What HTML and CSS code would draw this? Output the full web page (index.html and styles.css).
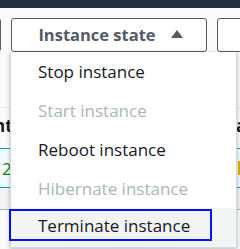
FILE: index.html
```html
<!DOCTYPE html>
<html>
	<head>
		<title>Instance state</title>
		<link rel="stylesheet" href="styles.css">
	</head>
	<body>
		<div class="page">
			<div class="topbar"></div>

			<div class="toolbar">
				<button class="btn btn-edge btn-left"></button>
				<div class="dropdown">
					<button class="btn btn-main">
						<span>Instance state</span>
						<svg class="caret" width="12" height="8" viewBox="0 0 12 8"><polygon points="6,0 12,8 0,8" fill="#545b64"/></svg>
					</button>
					<ul class="menu">
						<li class="item">Stop instance</li>
						<li class="item disabled">Start instance</li>
						<li class="item">Reboot instance</li>
						<li class="item disabled">Hibernate instance</li>
						<li class="item active"><span class="ring">Terminate instance</span></li>
					</ul>
				</div>
				<button class="btn btn-edge"></button>
			</div>

			<div class="table">
				<div class="row row-gap"></div>
				<div class="row row-head">
					<span class="cell-left">nt</span>
					<span class="cell-right">a</span>
				</div>
				<div class="row row-selected">
					<span class="cell-left num">2</span>
					<span class="cell-right"><span class="dot"></span><span class="warn">l</span></span>
				</div>
				<div class="row row-next"></div>
			</div>
		</div>
	</body>
</html>
```

FILE: styles.css
```css
body {
	margin: 0;
	background-color: #fafafa;
	font-family: "Open Sans", sans-serif;
	color: #16191f;
}
.page {
	height: 249px;
	overflow: hidden;
}
.topbar {
	height: 8px;
	background-color: #232f3e;
}

.toolbar {
	display: flex;
	gap: 10px;
	padding-top: 10px;
	height: 34px;
}
.btn {
	box-sizing: border-box;
	height: 34px;
	background-color: #fff;
	border: 1px solid #545b64;
	border-radius: 3px;
	font-family: inherit;
}
.btn-edge {
	width: 40px;
	flex-shrink: 0;
}
.btn-left {
	margin-left: -39px;
}
.dropdown {
	position: relative;
	z-index: 2;
}
.btn-main {
	width: 196px;
	display: flex;
	align-items: center;
	justify-content: center;
	gap: 15px;
	padding: 0 0 1px 3px;
	color: #545b64;
	font-size: 16.5px;
	font-weight: 700;
}
.caret {
	margin-top: -1px;
}

.menu {
	position: absolute;
	left: -1px;
	top: 34px;
	width: 225px;
	margin: 0;
	padding: 0;
	list-style: none;
	background-color: #fff;
	border: 1px solid #d5dbdb;
	border-top: 0;
	box-shadow: 0 1px 4px rgba(0, 28, 36, 0.3);
}
.item {
	box-sizing: border-box;
	height: 39px;
	padding-left: 27px;
	display: flex;
	align-items: center;
	font-size: 17px;
}
.disabled {
	color: #aab7b8;
}
.active {
	background-color: #f2f3f3;
	padding: 0;
	align-items: flex-start;
}
.ring {
	box-sizing: border-box;
	width: 203px;
	height: 32px;
	margin: 1px 0 0 -2px;
	padding-left: 27px;
	border: 2px solid #0011ff;
	display: flex;
	align-items: center;
}

.table {
	position: relative;
	z-index: 1;
}
.row {
	display: flex;
	justify-content: space-between;
	align-items: center;
	font-size: 17px;
}
.row-gap {
	height: 55px;
	border-bottom: 1px solid #eaeded;
}
.row-head {
	box-sizing: border-box;
	height: 41px;
	padding-bottom: 6px;
	font-weight: 700;
	border-bottom: 1px solid #00a1c9;
}
.row-selected {
	height: 38px;
	background-color: #f1faff;
	border-bottom: 1px solid #00a1c9;
}
.row-next {
	height: 21px;
	background-color: #f2f3f3;
	border-bottom: 1px solid #aab7b8;
}
.cell-left {
	margin-left: -6px;
}
.num {
	margin-left: 2px;
	color: #1d8102;
}
.cell-right {
	width: 4px;
	overflow: hidden;
	display: flex;
	align-items: center;
}
.dot {
	width: 2px;
	height: 2px;
	background-color: #1d8102;
	margin-right: 1px;
}
.warn {
	color: #d9a600;
	font-weight: 700;
}
```
